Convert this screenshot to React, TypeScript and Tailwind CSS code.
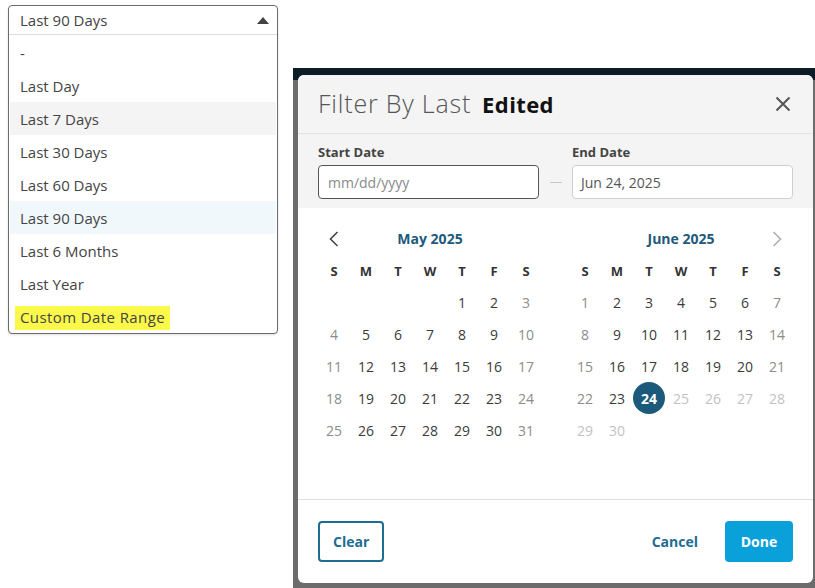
import React from "react";

const font = { fontFamily: '"Open Sans", "Liberation Sans", sans-serif' };

const options = [
  "-",
  "Last Day",
  "Last 7 Days",
  "Last 30 Days",
  "Last 60 Days",
  "Last 90 Days",
  "Last 6 Months",
  "Last Year",
];

function Dropdown() {
  return (
    <div className="w-[270px] mt-[5px] ml-[8px] h-[329px] border border-[#6b6b6b] rounded-[4px] bg-white shadow-sm flex flex-col">
      <div className="h-[32px] flex items-center justify-between pl-[11px] pr-[8px] border-b border-[#dcdcdc] text-[15px] text-[#444]">
        <span>Last 90 Days</span>
        <svg width="12" height="7" viewBox="0 0 12 7">
          <path d="M0 7 L6 0 L12 7 Z" fill="#444" />
        </svg>
      </div>
      <div className="flex flex-col px-[1px] pt-[1px]">
        {options.map((o) => (
          <div
            key={o}
            className={
              "h-[33px] flex items-center pl-[10px] pt-[2px] text-[15px] text-[#444] " +
              (o === "Last 7 Days" ? "bg-[#f4f4f4]" : o === "Last 90 Days" ? "bg-[#f1f8fc]" : "")
            }
          >
            {o}
          </div>
        ))}
        <div className="h-[33px] flex items-center pl-[5px] pt-[2px]">
          <span className="bg-[#fbf84c] px-[5px] h-[24px] flex items-center text-[15px] text-[#444] tracking-[0.4px]">
            Custom Date Range
          </span>
        </div>
      </div>
    </div>
  );
}

type MonthProps = { title: string; lead: number; days: number; june?: boolean };

function Month({ title, lead, days, june }: MonthProps) {
  const cells: (number | null)[] = [];
  for (let i = 0; i < lead; i++) cells.push(null);
  for (let d = 1; d <= days; d++) cells.push(d);
  return (
    <div className="w-[224px]">
      <div className="h-[31px] flex items-center">
        <div className="w-[32px] flex justify-center">
          {!june && (
            <svg width="10" height="16" viewBox="0 0 10 16">
              <path d="M8.5 1 L1.5 8 L8.5 15" fill="none" stroke="#444" strokeWidth="1.6" />
            </svg>
          )}
        </div>
        <div className="flex-1 text-center text-[14px] font-bold text-[#1d5a7b]">{title}</div>
        <div className="w-[32px] flex justify-center">
          {june && (
            <svg width="10" height="16" viewBox="0 0 10 16">
              <path d="M1.5 1 L8.5 8 L1.5 15" fill="none" stroke="#b0b0b0" strokeWidth="1.6" />
            </svg>
          )}
        </div>
      </div>
      <div className="grid grid-cols-7">
        {["S", "M", "T", "W", "T", "F", "S"].map((d, i) => (
          <div key={i} className="h-[32px] pt-[3px] flex items-center justify-center text-[13px] font-bold text-[#333]">
            {d}
          </div>
        ))}
        {cells.map((d, i) => {
          if (d === null) return <div key={i} className="h-[32px]" />;
          const col = i % 7;
          if (june && d === 24)
            return (
              <div key={i} className="h-[32px] flex items-center justify-center">
                <div className="w-[32px] h-[32px] rounded-full bg-[#1b5a7b] text-white font-bold text-[14px] flex items-center justify-center">
                  24
                </div>
              </div>
            );
          let color = "text-[#3b3b3b]";
          if (june && d > 24) color = "text-[#c2c2c2]";
          else if (col === 0 || col === 6) color = "text-[#8c8c8c]";
          return (
            <div key={i} className={"h-[32px] flex items-center justify-center text-[14px] " + color}>
              {d}
            </div>
          );
        })}
      </div>
    </div>
  );
}

function Modal() {
  return (
    <div className="relative w-[515px] h-[508px] bg-white rounded-[6px] overflow-hidden flex flex-col">
      <div className="h-[59px] bg-[#f4f4f4] border-b border-[#e4e4e4] flex items-center pl-[20px] pr-[22px]">
        <span className="text-[25px] font-light text-[#555] tracking-[0.8px]">Filter By Last</span>
        <span className="ml-[11px] text-[22px] font-bold text-[#111] tracking-[0.4px]">Edited</span>
        <div className="flex-1" />
        <svg width="16" height="16" viewBox="0 0 16 16">
          <path d="M1.5 1.5 L14.5 14.5 M14.5 1.5 L1.5 14.5" stroke="#555" strokeWidth="2" />
        </svg>
      </div>
      <div className="h-[74px] bg-[#f4f4f4] flex items-end px-[20px] pb-[9px]">
        <div className="flex flex-col w-[221px]">
          <span className="text-[13px] font-bold text-[#444] mb-[3px]">Start Date</span>
          <div className="h-[34px] border border-[#555] rounded-[4px] bg-white flex items-center pl-[9px] text-[14px] text-[#8a8a8a]">
            mm/dd/yyyy
          </div>
        </div>
        <div className="w-[33px] h-[34px] flex items-center justify-center">
          <div className="w-[12px] h-[1px] bg-[#c8c8c8]" />
        </div>
        <div className="flex flex-col w-[221px]">
          <span className="text-[13px] font-bold text-[#444] mb-[3px]">End Date</span>
          <div className="h-[34px] border border-[#cfcfcf] rounded-[4px] bg-white flex items-center pl-[8px] text-[14px] text-[#555]">
            Jun 24, 2025
          </div>
        </div>
      </div>
      <div className="flex-1 flex gap-[27px] px-[20px] pt-[15px] border-b border-[#dedede]">
        <Month title="May 2025" lead={4} days={31} />
        <Month title="June 2025" lead={0} days={30} june />
      </div>
      <div className="h-[83px] flex items-center px-[20px]">
        <button className="h-[41px] px-[13px] border-2 border-[#1d6d93] rounded-[4px] text-[14px] font-bold text-[#1d6d93]">
          Clear
        </button>
        <div className="flex-1" />
        <button className="text-[14px] font-bold text-[#1d6d93] mr-[27px]">Cancel</button>
        <button className="h-[41px] w-[68px] bg-[#0aa0da] rounded-[4px] text-[14px] font-bold text-white">
          Done
        </button>
      </div>
    </div>
  );
}

export default function App() {
  return (
    <div className="w-[815px] h-[588px] bg-white overflow-hidden flex" style={font}>
      <Dropdown />
      <div className="relative ml-[15px] mt-[68px] w-[522px] h-[520px] bg-[#6c6c6c]">
        <div className="absolute top-0 left-0 right-0 h-[12px] bg-[#0e1c25]" />
        <div className="relative pt-[7px] pl-[5px]">
          <Modal />
        </div>
      </div>
    </div>
  );
}
